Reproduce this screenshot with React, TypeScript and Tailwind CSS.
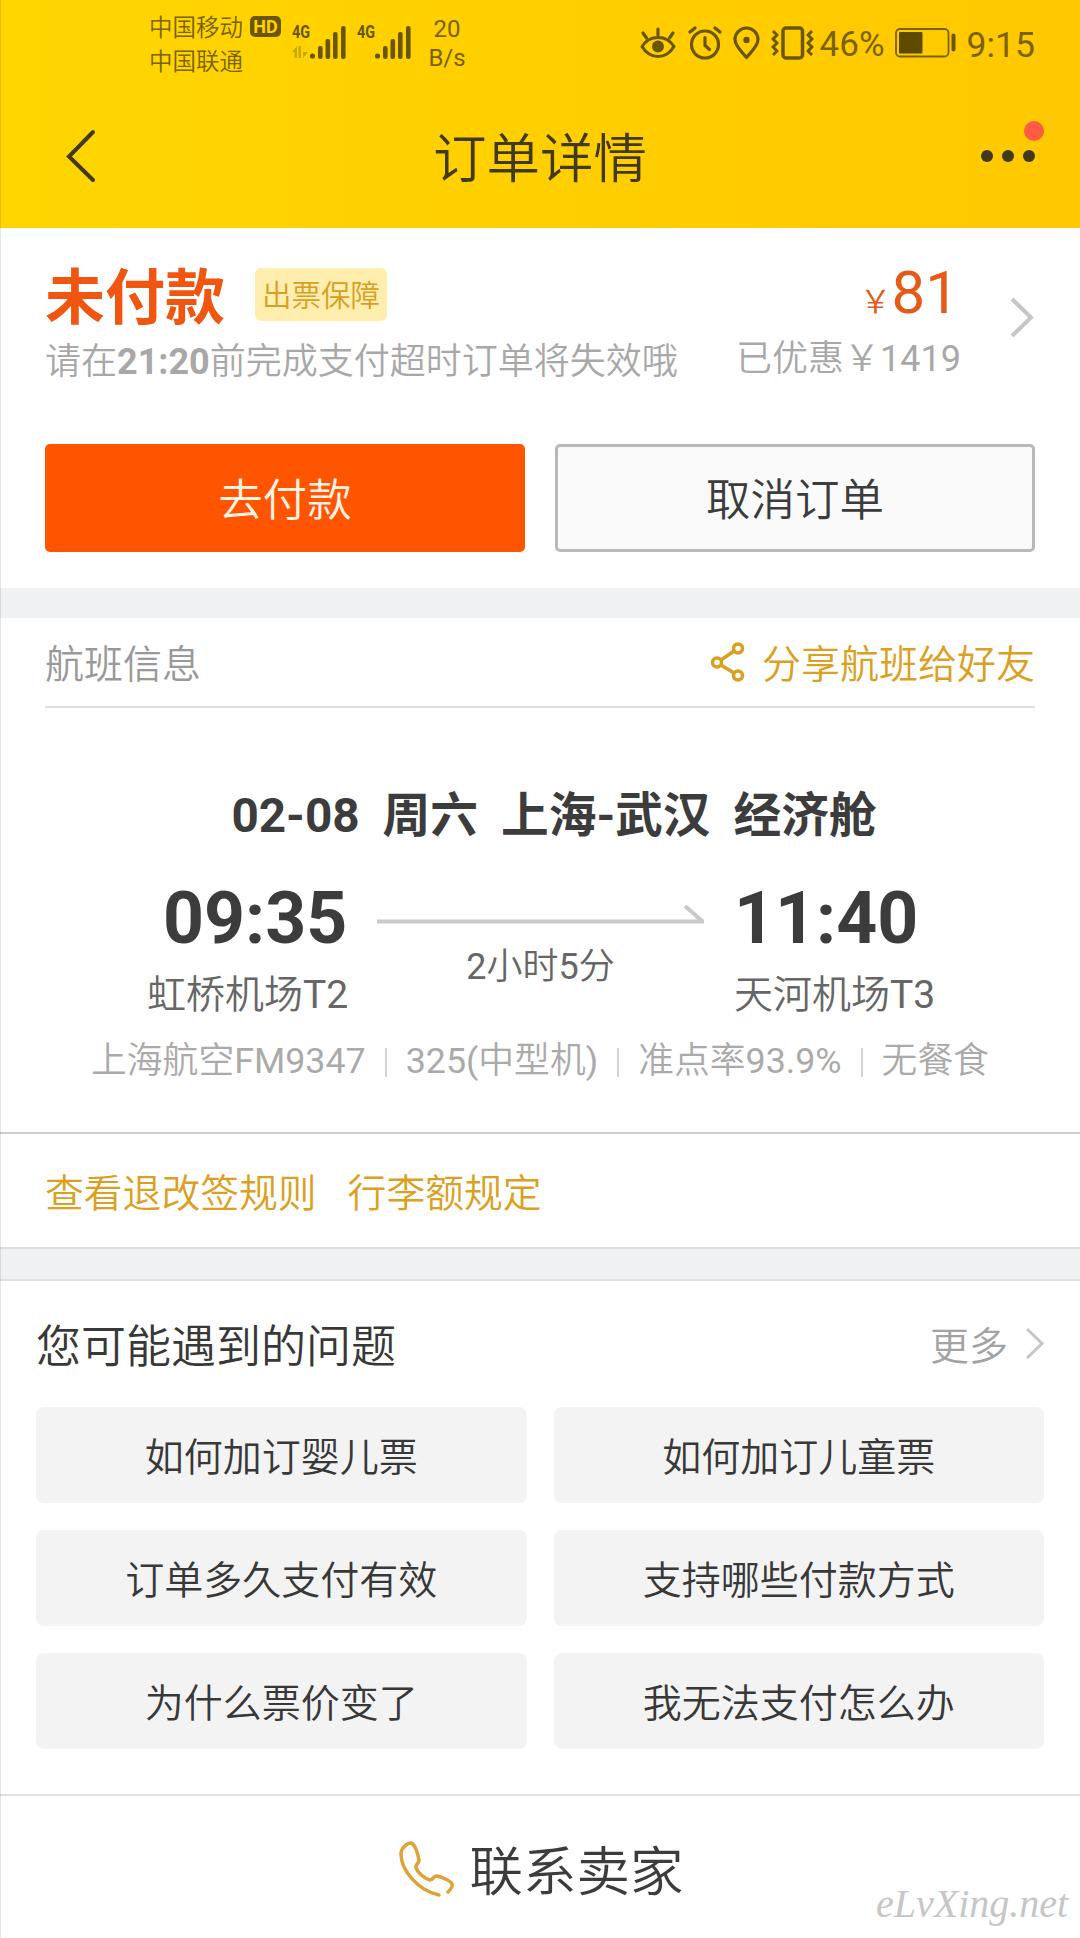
import React from "react";

const questions = [
  "如何加订婴儿票",
  "如何加订儿童票",
  "订单多久支付有效",
  "支持哪些付款方式",
  "为什么票价变了",
  "我无法支付怎么办",
];

const Signal: React.FC<{ data?: boolean }> = ({ data }) => (
  <div className="relative">
    <span className="absolute -top-[3px] left-0 origin-left scale-x-80 font-[Roboto] text-[18px] leading-[22px] font-bold text-[#6b5600]">
      4G
    </span>
    <svg width="56" height="36" viewBox="0 0 56 36" fill="#6b5600">
      {data && (
        <path
          d="M0 28l5-6v12H2.500v-6zM6.500 22h2.500v12H6.500zM11 22v6h5l-5 6z"
          fill="#c9a800"
        />
      )}
      <circle cx="20.5" cy="32" r="2.6" />
      <rect x="26" y="22" width="4.6" height="13" rx="2" />
      <rect x="33.5" y="15" width="4.6" height="20" rx="2" />
      <rect x="41" y="8" width="4.6" height="27" rx="2" />
      <rect x="49" y="2" width="4.6" height="33" rx="2" />
    </svg>
  </div>
);

const EyeIcon: React.FC = () => (
  <svg width="36" height="34" viewBox="0 0 36 34" fill="none" stroke="#6b5600" strokeWidth="3.2" strokeLinecap="round">
    <path d="M2 20.5C6 14 12 11.500 18 11.500S30 14 34 20.500C30 27 24 30.500 18 30.500S6 27 2 20.500Z" strokeLinejoin="round" />
    <circle cx="18" cy="20.500" r="6" fill="#6b5600" stroke="none" />
    <path d="M18 3v6M3 7l3.500 5M33 7l-3.500 5" />
  </svg>
);

const AlarmIcon: React.FC = () => (
  <svg width="34" height="34" viewBox="0 0 34 34" fill="none" stroke="#6b5600" strokeWidth="3.2" strokeLinecap="round">
    <circle cx="17" cy="18.500" r="13.500" />
    <path d="M17 11.500v8l4.500 4M2 6l5-4M32 6l-5-4" />
  </svg>
);

const PinIcon: React.FC = () => (
  <svg width="27" height="34" viewBox="0 0 27 34" fill="none" stroke="#6b5600" strokeWidth="3.2">
    <path d="M13.500 31.500C9 26 2 20 2 13.500a11.500 11.500 0 0 1 23 0C25 20 18 26 13.500 31.500Z" strokeLinejoin="round" />
    <circle cx="13.500" cy="14" r="3.200" fill="#6b5600" stroke="none" />
  </svg>
);

const VibrateIcon: React.FC = () => (
  <svg width="43" height="34" viewBox="0 0 43 34" fill="none" stroke="#6b5600" strokeWidth="3">
    <rect x="12" y="2" width="19.500" height="30" rx="3" strokeWidth="3.500" />
    <path d="M2 5l4 4-4 4 4 4-4 4 4 4-4 4M41 5l-4 4 4 4-4 4 4 4-4 4 4 4" strokeLinejoin="round" />
  </svg>
);

const StatusBar: React.FC = () => (
  <div className="flex h-[90px] justify-between pt-2 pr-[45px] pl-[149px] text-[#7a6200]">
    <div className="flex">
      <div className="flex flex-col pt-[3px] text-[23.5px] leading-[34px]">
        <div className="flex h-[34px] items-center gap-[7px]">
          <span>中国移动</span>
          <span className="mb-[3px] flex h-[21px] w-[31px] items-center justify-center rounded-[5px] bg-[#6b5600] font-[Roboto] text-[18px] leading-[21px] font-bold text-[#ffd200]">
            HD
          </span>
        </div>
        <span>中国联通</span>
      </div>
      <div className="mt-[16px] ml-[11px] flex gap-[9px]">
        <Signal data />
        <Signal />
      </div>
      <div className="mt-[7px] ml-[15px] w-[38px] text-center text-[24px] leading-[29px]">
        20
        <br />
        B/s
      </div>
    </div>
    <div className="mt-[17px] flex h-[36px] items-center">
      <EyeIcon />
      <span className="w-[12px]" />
      <AlarmIcon />
      <span className="w-[11px]" />
      <PinIcon />
      <span className="w-[11px]" />
      <VibrateIcon />
      <span className="mt-[3px] ml-[6px] text-[35px] leading-[36px]">46%</span>
      <svg className="ml-[10px]" width="61" height="30" viewBox="0 0 61 30">
        <rect x="1" y="1" width="52.500" height="27.500" rx="4" fill="none" stroke="#7a6200" strokeWidth="1.800" />
        <rect x="4" y="4" width="23.500" height="21.500" rx="1" fill="#5e4b00" />
        <rect x="56.500" y="5.500" width="4" height="18" rx="2" fill="#6b5600" />
      </svg>
      <span className="mt-[3px] ml-[11px] text-[35.5px] leading-[36px]">9:15</span>
    </div>
  </div>
);

const Header: React.FC = () => (
  <header className="h-[228px] bg-linear-to-r from-[#ffd600] to-[#ffc800]">
    <StatusBar />
    <div className="flex h-[132px] items-center justify-between pr-[43px] pl-[65px] text-[#40391a]">
      <svg width="40" height="56" viewBox="0 0 40 56" fill="none" stroke="currentColor" strokeWidth="4" strokeLinecap="round">
        <path d="M28 4L4 28.500 28 52" />
      </svg>
      <h1 className="pt-[8px] text-[53.5px] leading-none">订单详情</h1>
      <div className="relative">
        <svg width="62" height="12" viewBox="0 0 62 12" fill="currentColor">
          <circle cx="12" cy="6" r="6" />
          <circle cx="33" cy="6" r="6" />
          <circle cx="54" cy="6" r="6" />
        </svg>
        <span className="absolute -top-[29px] -right-[7px] size-[20px] rounded-full bg-[#ff5b45]" />
      </div>
    </div>
  </header>
);

const Payment: React.FC = () => (
  <section className="h-[360px] px-[45px] pt-[30px]">
    <div className="flex h-[130px] justify-between">
      <div>
        <div className="flex h-[72px] items-center">
          <h2 className="pb-[2px] font-['Noto_Sans_CJK_SC'] text-[60px] leading-none font-bold text-[#f0560f]">
            未付款
          </h2>
          <span className="ml-[30px] h-[53px] w-[132px] rounded-md bg-[#ffeeae] pt-[2px] text-center text-[29.5px] leading-[53px] text-[#d6a024]">
            出票保障
          </span>
        </div>
        <p className="pt-[4px] text-[36px] leading-[56px] text-[#a8a8a8]">
          请在<b>21:20</b>前完成支付超时订单将失效哦
        </p>
      </div>
      <div className="flex">
        <div className="text-right">
          <p className="h-[72px] pr-[2px] text-[60px] leading-[70px] text-[#e55a16]">
            <span className="text-[32px]">￥</span>81
          </p>
          <p className="pt-px text-[36px] leading-[56px] text-[#a8a8a8]">
            已优惠￥1419
          </p>
        </div>
        <svg className="mt-[39px] ml-[48px]" width="26" height="42" viewBox="0 0 26 42" fill="none" stroke="#c6c6c6" strokeWidth="4">
          <path d="M3 2l19 18.500L3 39" />
        </svg>
      </div>
    </div>
    <div className="mt-[56px] grid grid-cols-2 gap-[30px] text-[44.5px]">
      <button className="h-[108px] rounded-[5px] bg-[#ff5500] pt-[7px] text-[#fff3e6]">
        去付款
      </button>
      <button className="h-[108px] rounded-[5px] border-[3px] border-[#b9b9b9] bg-[#fafafa] pt-[7px] text-[#3c3c3c]">
        取消订单
      </button>
    </div>
  </section>
);

const Airport: React.FC<{ time: string; name: string; className?: string }> = ({
  time,
  name,
  className = "",
}) => (
  <div className="flex w-[200px] flex-col">
    <span
      className={`text-[71.5px] leading-[80px] font-bold text-[#3c3c3c] ${className}`}
    >
      {time}
    </span>
    <span className="mt-[6px] text-[39px] leading-[60px] whitespace-nowrap">
      {name}
    </span>
  </div>
);

const Divider: React.FC = () => (
  <i className="h-[29px] w-[2px] bg-[#d4d4d4]" />
);

const Flight: React.FC = () => (
  <section className="border-b-2 border-[#dcdee0]">
    <div className="mx-[45px] flex h-[90px] items-center justify-between border-b-2 border-[#dedede] text-[39px]">
      <span className="pt-[6px] text-[#999]">航班信息</span>
      <span className="flex items-center gap-[17px] text-[#dba01f]">
        <svg width="35" height="40" viewBox="0 0 35 40" fill="none" stroke="currentColor" strokeWidth="3.500">
          <circle cx="7" cy="20.500" r="4.500" />
          <circle cx="28" cy="6.500" r="4.500" />
          <circle cx="28" cy="33.500" r="4.500" />
          <path d="M11 18L24 9M11 23l13 8" />
        </svg>
        <span className="pt-[6px]">分享航班给好友</span>
      </span>
    </div>
    <h3 className="mt-[76px] flex justify-center gap-[23px] pl-[28px] font-[Roboto,'Noto_Sans_CJK_SC'] text-[47.7px] leading-[64px] font-bold text-[#3c3c3c]">
      <span>02-08</span>
      <span>周六</span>
      <span>上海-武汉</span>
      <span>经济舱</span>
    </h3>
    <div className="mt-[31px] flex justify-between pr-[146px] pl-[147px] text-[#666]">
      <Airport time="09:35" name="虹桥机场T2" className="pl-[16px]" />
      <div className="flex flex-col items-center">
        <svg className="mt-[25px]" width="328" height="22" viewBox="0 0 328 22" fill="none" stroke="#c9c9c9">
          <path d="M0 17.500h327" strokeWidth="4" />
          <path d="M308 2l17 15" strokeWidth="4" />
        </svg>
        <span className="mt-[9px] text-[36px] leading-[64px]">2小时5分</span>
      </div>
      <Airport time="11:40" name="天河机场T3" />
    </div>
    <div className="mt-[6px] flex h-[62px] items-center justify-center gap-[19px] text-[35.8px] text-[#aaa]">
      <span>上海航空FM9347</span>
      <Divider />
      <span>325(中型机)</span>
      <Divider />
      <span>准点率93.9%</span>
      <Divider />
      <span>无餐食</span>
    </div>
    <div className="mt-[39px] flex h-[115px] items-center gap-[31px] border-t-2 border-[#cfcfcf] pt-[8px] pl-[45px] text-[38.8px] text-[#dba01f]">
      <a>查看退改签规则</a>
      <a>行李额规定</a>
    </div>
  </section>
);

const Questions: React.FC = () => (
  <section className="h-[517px] border-y-2 border-[#dfe1e3] px-9">
    <div className="flex h-[126px] items-center justify-between">
      <h3 className="pt-[8px] text-[45px] text-[#383838]">您可能遇到的问题</h3>
      <span className="flex items-center gap-[18px] text-[39px] text-[#a3a3a3]">
        <span className="pt-[6px]">更多</span>
        <svg width="18" height="34" viewBox="0 0 18 34" fill="none" stroke="#c6c6c6" strokeWidth="3">
          <path d="M1 2l15 14.500L1 31" />
        </svg>
      </span>
    </div>
    <div className="grid grid-cols-2 gap-[27px]">
      {questions.map((q) => (
        <button key={q} className="h-24 rounded-lg bg-[#f3f3f3] pt-[7px] text-[39px] text-[#383838]">
          {q}
        </button>
      ))}
    </div>
  </section>
);

export default function App() {
  return (
    <div
      lang="zh-CN"
      className="relative h-[1938px] w-[1080px] overflow-hidden bg-white font-[Roboto,'Noto_Sans_CJK_SC_DemiLight','Noto_Sans_CJK_SC',sans-serif] font-normal"
    >
      <Header />
      <Payment />
      <div className="h-[30px] bg-[#f0f1f3]" />
      <Flight />
      <div className="h-[30px] bg-[#f0f1f3]" />
      <Questions />
      <footer className="flex h-[145px] items-center justify-center gap-[15px] pl-[2px] text-[53.5px] text-[#3c3c3c]">
        <svg width="56" height="56" viewBox="0 0 56 56" fill="none" stroke="#dfa236" strokeWidth="3.500" strokeLinecap="round" strokeLinejoin="round">
          <path d="M40 54C20 50 2 30 2 13 2 7 8 2 12 2c4 1 7 11 8 17 0 4-4 4-3 8 2 5 9 11 14 12 4 0 3-5 7-4 5 1 14 5 15 8 1 3-2 6-4 8" />
        </svg>
        <span className="pt-[10px]">联系卖家</span>
      </footer>
      <span className="absolute top-[1882px] left-[876px] font-['Liberation_Serif'] text-[40px] leading-[44px] text-[#c6c6c6] italic">
        eLvXing.net
      </span>
      <span className="absolute inset-y-0 left-0 w-px bg-black/10" />
    </div>
  );
}
